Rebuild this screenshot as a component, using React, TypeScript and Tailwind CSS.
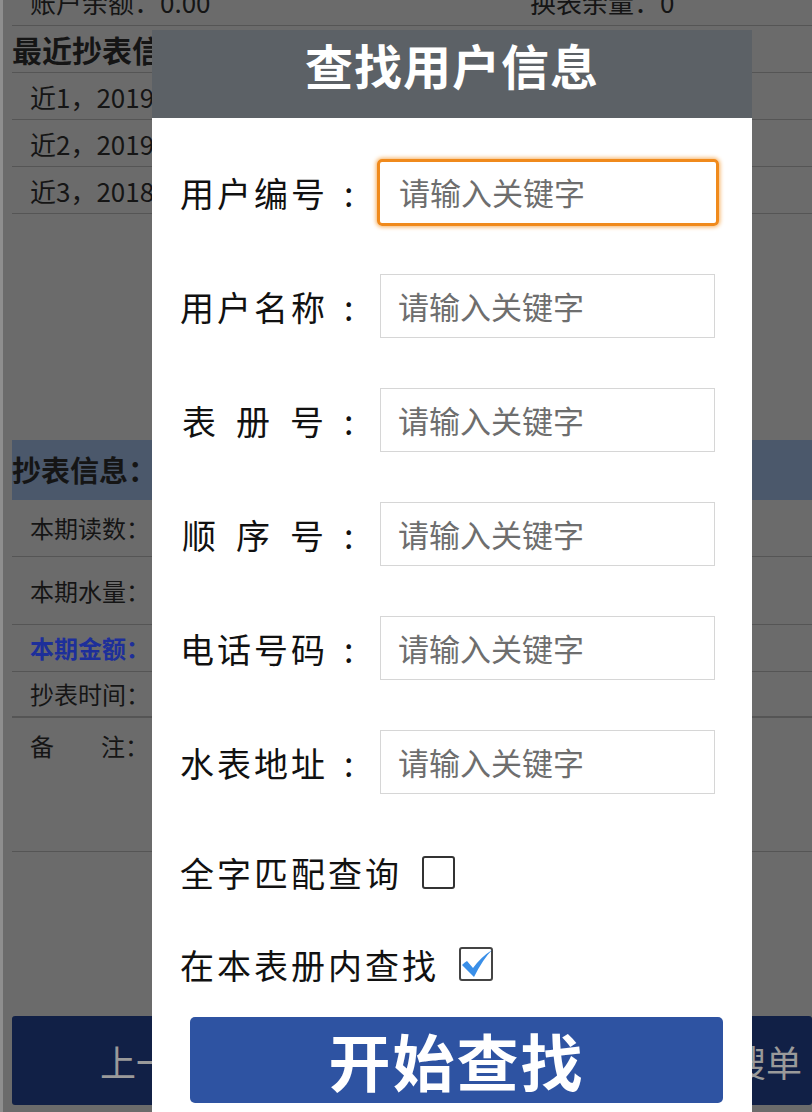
import React from 'react';

const fields = [
  { text: '用户编号', wide: false },
  { text: '用户名称', wide: false },
  { text: '表册号', wide: true },
  { text: '顺序号', wide: true },
  { text: '电话号码', wide: false },
  { text: '水表地址', wide: false },
];

const recent = ['近1，2019-06-12  读数：1286  水量：18', '近2，2019-05-10  读数：1268  水量：21', '近3，2018-12-09  读数：1247  水量：16'];

const FieldLabel: React.FC<{ text: string; wide: boolean }> = ({ text, wide }) => (
  <div className="flex items-center w-[200px] shrink-0 text-[34px] text-[#111] whitespace-nowrap">
    <span className={wide ? 'pl-[2px] tracking-[20px]' : 'tracking-[3px]'}>{text}</span>
    <span className={wide ? 'ml-0' : 'ml-[16px]'}>:</span>
  </div>
);

// text on the page behind the dialog, clipped where the dialog starts
const Clip: React.FC<{ children: React.ReactNode }> = ({ children }) => (
  <div className="w-[140px] overflow-hidden whitespace-nowrap">{children}</div>
);

const App: React.FC = () => {
  return (
    <div className="relative w-[812px] h-[1112px] overflow-hidden bg-[#6b6b6b] font-['Noto_Sans_CJK_SC',sans-serif]">
      {/* dimmed page behind the dialog */}
      <div className="flex flex-col h-full border-l-[3px] border-[#8e8e8e] pl-[9px] text-[#151515]">
        <div className="h-[26px] flex items-start border-b border-[#555] overflow-hidden">
          <div className="flex w-full -mt-[14px] text-[26px] leading-[32px]">
            <span className="ml-[18px] w-[500px]">账户余额：0.00</span>
            <span>换表余量：0</span>
          </div>
        </div>
        <div className="h-[47px] flex items-center border-b border-[#555] text-[30px] font-bold">
          <Clip>最近抄表信息：</Clip>
        </div>
        {recent.map((r) => (
          <div key={r} className="h-[47px] flex items-center border-b border-[#555] pl-[18px] text-[26px]">
            <Clip>{r}</Clip>
          </div>
        ))}
        <div className="h-[226px]" />
        <div className="h-[60px] flex items-center bg-[#4b586b] text-[29px] font-bold">
          <Clip>抄表信息：</Clip>
        </div>
        <div className="h-[57px] flex items-center border-b border-[#555] pl-[18px] text-[24px]">本期读数：</div>
        <div className="h-[68px] flex items-center border-b border-[#555] pl-[18px] text-[24px]">本期水量：</div>
        <div className="h-[47px] flex items-center border-b border-[#555] pl-[18px] text-[24px] font-bold text-[#1d2f9a]">本期金额：</div>
        <div className="h-[46px] flex items-center border-b-2 border-[#555] pl-[18px] text-[24px]">抄表时间：</div>
        <div className="h-[134px] border-b border-[#555] pl-[18px] pt-[10px] text-[24px]">
          <span className="inline-flex w-[95px] justify-between">
            <span>备</span>
            <span>注</span>
          </span>
          ：
        </div>
        <div className="flex-1" />
        <div className="h-[89px] mb-[7px] flex items-center justify-between bg-[#112046] rounded-[3px] text-[#9a9a9a] text-[36px] pl-[88px] pr-[10px]">
          <span>上一户</span>
          <span>搜单</span>
        </div>
      </div>

      {/* dialog */}
      <div className="absolute left-[152px] top-[30px] w-[600px] flex flex-col">
        <div className="h-[88px] flex items-start justify-center pt-[10px] bg-[#5c6166] text-white text-[48px] leading-[1] font-bold tracking-[1px]">
          查找用户信息
        </div>
        <div className="bg-white h-[1000px] flex flex-col pl-[28px] pt-[42px]">
          <div className="flex flex-col gap-[50px]">
            {fields.map((f, i) => (
              <div key={f.text} className="flex items-center h-[64px]">
                <FieldLabel text={f.text} wide={f.wide} />
                {i === 0 ? (
                  <div className="w-[342px] h-[67px] -ml-[3px] flex items-center pl-[19px] border-[3px] border-[#f08a1c] rounded-[5px] shadow-[0_0_4px_1px_#f6b060] text-[31px] text-[#6e6e6e]">
                    请输入关键字
                  </div>
                ) : (
                  <div className="w-[335px] h-[64px] flex items-center pl-[17px] border border-[#d6d6d6] text-[31px] text-[#6e6e6e]">
                    请输入关键字
                  </div>
                )}
              </div>
            ))}
          </div>
          <div className="flex items-center mt-[61px] h-[34px] text-[34px] tracking-[3px] text-[#111]">
            <span>全字匹配查询</span>
            <span className="ml-[20px] w-[33px] h-[33px] border-2 border-[#333] rounded-[3px]" />
          </div>
          <div className="flex items-center mt-[58px] h-[34px] text-[34px] tracking-[3px] text-[#111]">
            <span>在本表册内查找</span>
            <span className="relative ml-[20px] w-[34px] h-[34px] border-2 border-[#444] rounded-[3px]">
              <svg viewBox="0 0 34 34" className="absolute -left-[2px] -top-[2px] w-[34px] h-[34px]">
                <path d="M3 18 Q6 15 8 14 L14 21 Q22 10 33 3 Q24 12 15 30 Z" fill="#3a8fe8" />
              </svg>
            </span>
          </div>
          <div className="mt-[36px] ml-[10px] w-[533px] h-[86px] flex items-center justify-center bg-[#2e53a2] rounded-[5px] text-white text-[62px] font-bold tracking-[2px]">
            开始查找
          </div>
        </div>
      </div>
    </div>
  );
};

export default App;
